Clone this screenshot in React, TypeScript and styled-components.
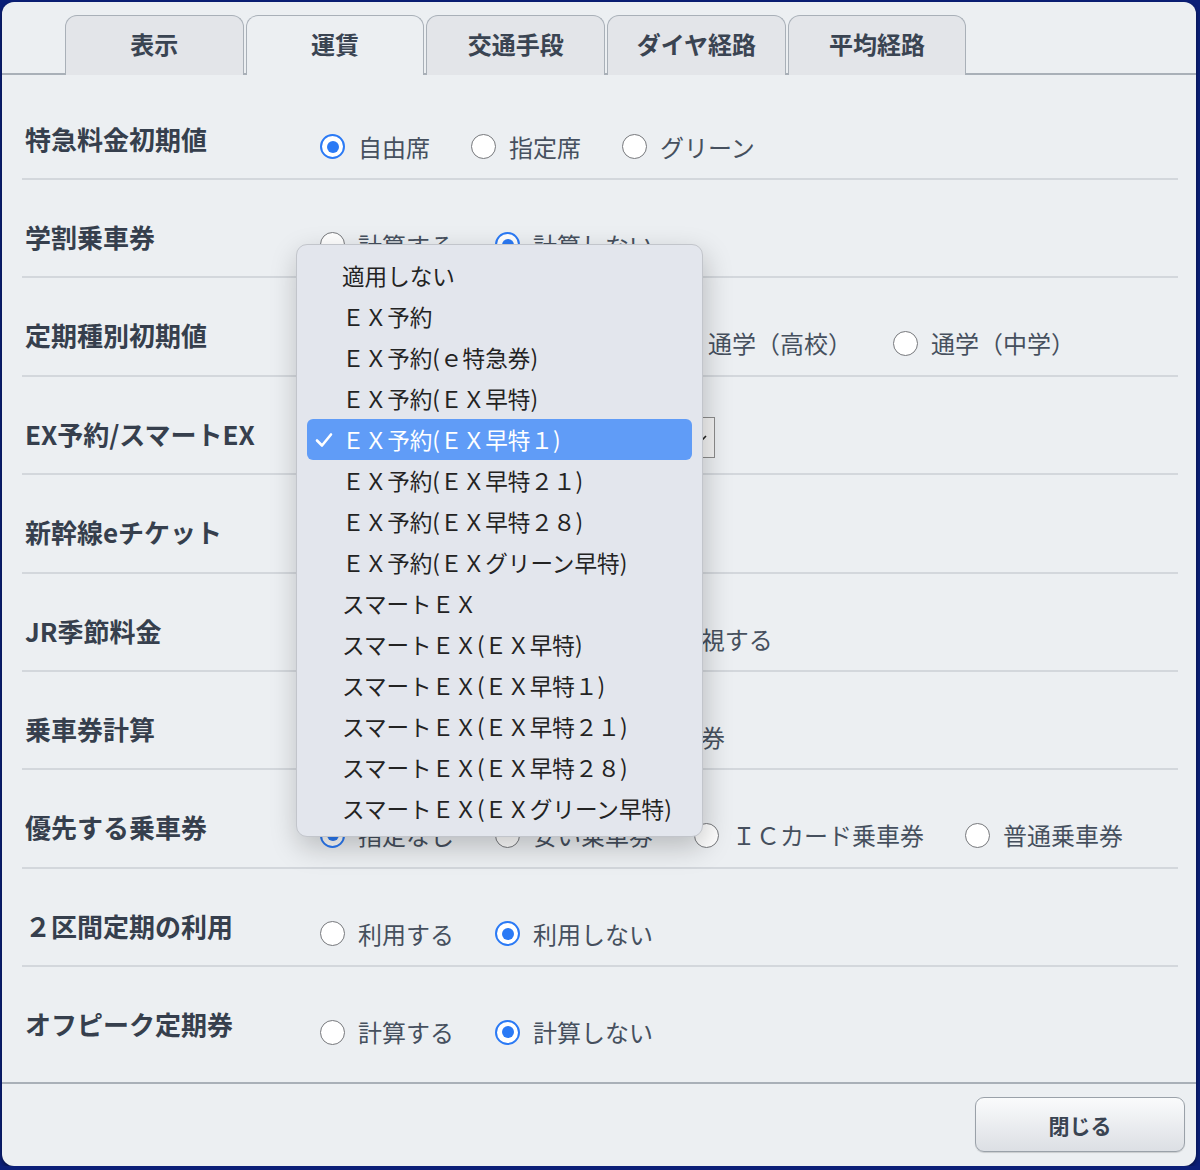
import React from "react";
import styled, {createGlobalStyle, css} from "styled-components";

const font = `"Noto Sans CJK JP", "Noto Sans", sans-serif`;

const GlobalStyle = createGlobalStyle`
  html, body {
    margin: 0;
    padding: 0;
    background: #0b1f78;
  }
  body {
    font-family: ${font};
  }
`;

type Choice = {text: string; checked?: boolean};

type SettingRow = {
	label: string;
	choices?: Choice[];
	select?: boolean;
};

const rows: SettingRow[] = [
	{label: "特急料金初期値", choices: [{text: "自由席", checked: true}, {text: "指定席"}, {text: "グリーン"}]},
	{label: "学割乗車券", choices: [{text: "計算する"}, {text: "計算しない", checked: true}]},
	{
		label: "定期種別初期値",
		choices: [{text: "通勤", checked: true}, {text: "通学（大学）"}, {text: "通学（高校）"}, {text: "通学（中学）"}],
	},
	{label: "EX予約/スマートEX", select: true},
	{label: "新幹線eチケット", choices: [{text: "利用する"}, {text: "利用しない", checked: true}]},
	{label: "JR季節料金", choices: [{text: "季節ごとの料金を考慮", checked: true}, {text: "無視する"}]},
	{label: "乗車券計算", choices: [{text: "紙の切符", checked: true}, {text: "ＩＣカード乗車券"}]},
	{
		label: "優先する乗車券",
		choices: [{text: "指定なし", checked: true}, {text: "安い乗車券"}, {text: "ＩＣカード乗車券"}, {text: "普通乗車券"}],
	},
	{label: "２区間定期の利用", choices: [{text: "利用する"}, {text: "利用しない", checked: true}]},
	{label: "オフピーク定期券", choices: [{text: "計算する"}, {text: "計算しない", checked: true}]},
];

const exOptions = [
	"適用しない",
	"ＥＸ予約",
	"ＥＸ予約(ｅ特急券)",
	"ＥＸ予約(ＥＸ早特)",
	"ＥＸ予約(ＥＸ早特１)",
	"ＥＸ予約(ＥＸ早特２１)",
	"ＥＸ予約(ＥＸ早特２８)",
	"ＥＸ予約(ＥＸグリーン早特)",
	"スマートＥＸ",
	"スマートＥＸ(ＥＸ早特)",
	"スマートＥＸ(ＥＸ早特１)",
	"スマートＥＸ(ＥＸ早特２１)",
	"スマートＥＸ(ＥＸ早特２８)",
	"スマートＥＸ(ＥＸグリーン早特)",
];

const tabs = ["表示", "運賃", "交通手段", "ダイヤ経路", "平均経路"];
const activeTab = 1;
const selectedEx = 4;

export default function App() {
	return (
		<>
			<GlobalStyle/>
			<Dialog>
				<TabBar>
					{tabs.map((t, i) => (
						<Tab key={t} active={i === activeTab}>{t}</Tab>
					))}
				</TabBar>
				<Content>
					{rows.map((row, idx) => (
						<Row key={row.label} last={idx === rows.length - 1}>
							<Label>{row.label}</Label>
							{row.select ? (
								<SelectWrap>
									<SelectBox>
										<span>{exOptions[selectedEx]}</span>
										<svg width="10" height="10" viewBox="0 0 10 10">
											<path d="M2 4 L5 7 L8 4" fill="none" stroke="#222" strokeWidth="1.6"/>
										</svg>
									</SelectBox>
									{/* open option list, drawn so the current choice sits over the box */}
									<Dropdown>
										{exOptions.map((o, i) => (
											<MenuItem key={o} selected={i === selectedEx}>
												{i === selectedEx && (
													<Check width="20" height="20" viewBox="0 0 20 20">
														<path d="M3 10.5 L8 15.5 L17 4.5" fill="none" stroke="#fff" strokeWidth="2.6"
															  strokeLinecap="round" strokeLinejoin="round"/>
													</Check>
												)}
												{o}
											</MenuItem>
										))}
									</Dropdown>
								</SelectWrap>
							) : (
								<Options>
									{row.choices!.map((c) => (
										<Option key={c.text}>
											<Radio checked={!!c.checked}/>
											<OptionText>{c.text}</OptionText>
										</Option>
									))}
								</Options>
							)}
						</Row>
					))}
				</Content>
				<Footer>
					<CloseButton>閉じる</CloseButton>
				</Footer>
			</Dialog>
		</>
	);
}

const lineColor = "#a9b0b8";

const Dialog = styled.div`
  margin: 2px 4px 0 2px;
  width: 1194px;
  height: 1164px;
  display: flex;
  flex-direction: column;
  background: #eceff2;
  border-radius: 12px;
  box-shadow: 0 2px 4px rgba(0, 0, 0, 0.5);
  position: relative;
`;

const TabBar = styled.div`
  display: flex;
  gap: 2px;
  height: 73px;
  box-sizing: border-box;
  padding: 13px 0 0 63px;
  border-bottom: 2px solid ${lineColor};
`;

const Tab = styled.div<{ active: boolean }>`
  width: 178.7px;
  height: 60px;
  box-sizing: border-box;
  display: flex;
  align-items: center;
  justify-content: center;
  padding-bottom: 4px;
  font-size: 24px;
  font-weight: 700;
  color: #3a4452;
  background: #e3e5e9;
  border: 1.5px solid ${lineColor};
  border-bottom: none;
  border-radius: 12px 12px 0 0;
  position: relative;

  ${(p) =>
		p.active &&
		css`
			background: #eceff2;
			z-index: 1;
		`}
`;

const Content = styled.div`
  flex: 1;
  padding: 6.6px 18px 0 20px;
`;

const Row = styled.div<{ last: boolean }>`
  height: 98.4px;
  box-sizing: border-box;
  display: flex;
  align-items: flex-start;
  padding-left: 3px;
  border-bottom: 2px solid #d3d7dc;

  ${(p) =>
		p.last &&
		css`
			border-bottom: none;
		`}
`;

const Label = styled.div`
  width: 295px;
  flex-shrink: 0;
  margin-top: 39px;
  line-height: 36px;
  font-size: 26px;
  font-weight: 700;
  color: #363f4d;
  white-space: nowrap;
`;

const Options = styled.div`
  display: flex;
  gap: 41px;
  margin-top: 47px;
`;

const Option = styled.label`
  display: flex;
  align-items: center;
  gap: 13px;
  height: 36px;
`;

const Radio = styled.span<{ checked: boolean }>`
  width: 25px;
  height: 25px;
  box-sizing: border-box;
  border-radius: 50%;
  flex-shrink: 0;
  background: #fff;
  border: 1.5px solid #76787c;
  position: relative;

  ${(p) =>
		p.checked &&
		css`
			border: 2.5px solid #2b7af5;
			&::after {
				content: "";
				position: absolute;
				left: 50%;
				top: 50%;
				width: 12px;
				height: 12px;
				margin: -6px 0 0 -6px;
				border-radius: 50%;
				background: #2b7af5;
			}
		`}
`;

const OptionText = styled.span`
  font-size: 24px;
  color: #46505e;
  white-space: nowrap;
  line-height: 36px;
`;

const SelectWrap = styled.div`
  position: relative;
  margin-top: 40px;
`;

const SelectBox = styled.div`
  width: 395px;
  height: 41px;
  box-sizing: border-box;
  display: flex;
  align-items: center;
  justify-content: space-between;
  padding: 0 6px 0 12px;
  background: #f3f3f3;
  border: 1px solid #8c8c8c;
  font-size: 20px;
  color: #222;
`;

const Dropdown = styled.div`
  position: absolute;
  left: -24px;
  top: -173px;
  width: 407px;
  height: 593px;
  box-sizing: border-box;
  padding: 10px 10px 0;
  background: #e3e6ed;
  border: 1px solid #c2c5cb;
  border-radius: 11px;
  box-shadow: 2px 10px 28px rgba(0, 0, 0, 0.22);
  z-index: 5;
`;

const MenuItem = styled.div<{ selected: boolean }>`
  height: 41px;
  display: flex;
  align-items: center;
  padding-left: 35px;
  position: relative;
  font-size: 22.6px;
  color: #232323;
  white-space: nowrap;
  border-radius: 6px;

  ${(p) =>
		p.selected &&
		css`
			background: #609cf7;
			color: #fff;
		`}
`;

const Check = styled.svg`
  position: absolute;
  left: 7px;
  top: 11px;
`;

const Footer = styled.div`
  height: 84px;
  box-sizing: border-box;
  border-top: 2px solid ${lineColor};
  display: flex;
  justify-content: flex-end;
  align-items: flex-start;
  padding: 13px 11px 0 0;
`;

const CloseButton = styled.button`
  width: 210px;
  height: 55px;
  font-family: ${font};
  font-size: 21px;
  font-weight: 700;
  color: #3a4452;
  background: linear-gradient(#fafbfc, #dcdfe4);
  border: 1.5px solid #9aa1a9;
  border-radius: 9px;
  box-shadow: 0 1px 1px rgba(0, 0, 0, 0.15);
`;
